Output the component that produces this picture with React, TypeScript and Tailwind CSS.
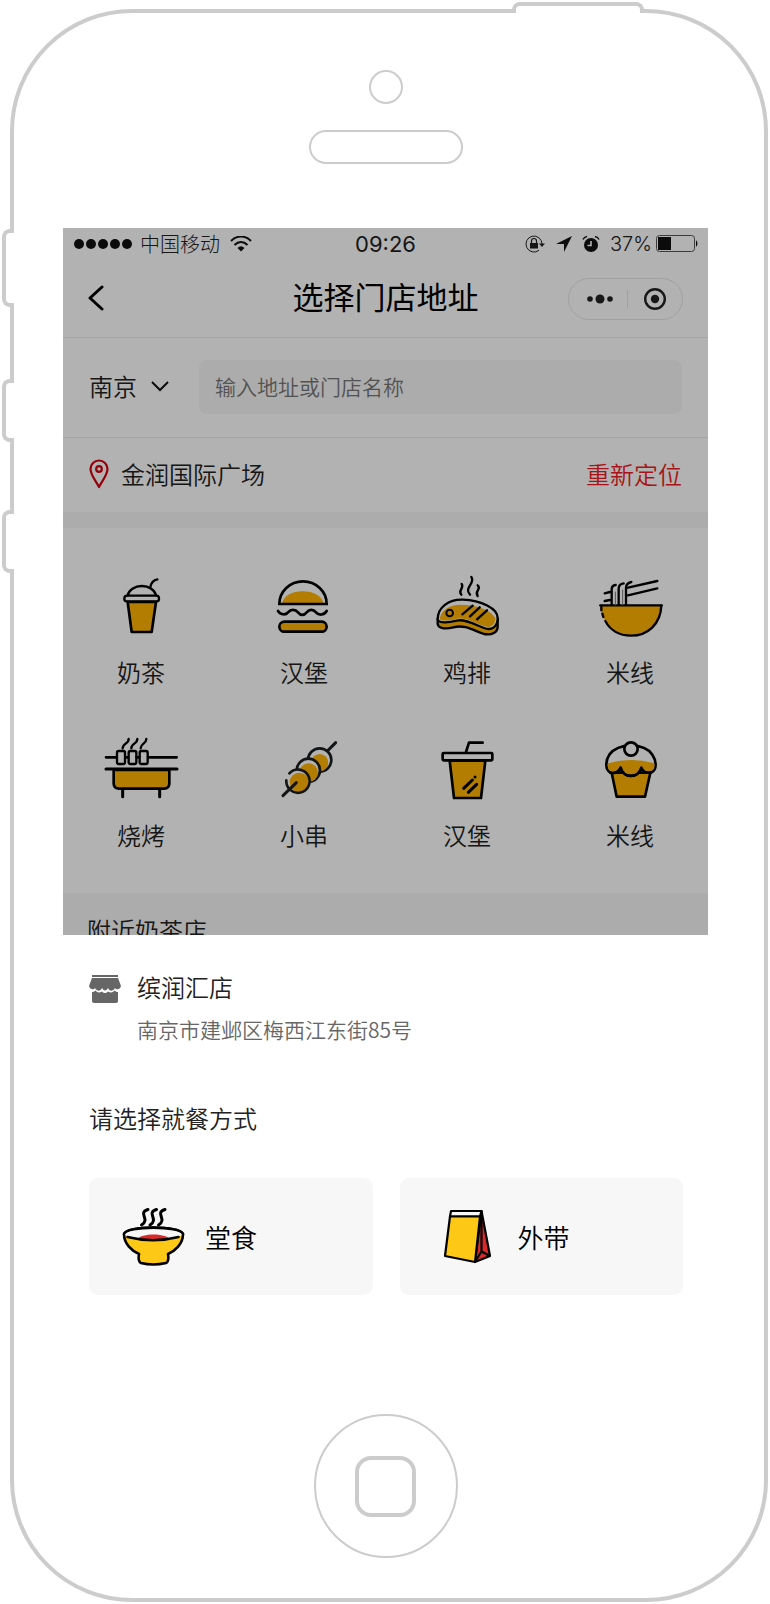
import type { ReactNode } from "react";

const categories: { name: string; viewBox: string; icon: ReactNode }[] = [
  {
    name: "奶茶",
    viewBox: "69 42 228 192",
    icon: (
      <>
        <path d="M143 126 L155 216 H215 L228 126 Z" fill="#ffb400" />
        <path d="M143 106 A43 33 0 0 1 228 106" strokeWidth="7" />
        <rect x="133" y="107" width="104" height="17" rx="8" strokeWidth="7" />
        <path d="M211 82 C213 70 219 60 232 58" strokeWidth="7" />
      </>
    ),
  },
  {
    name: "汉堡",
    viewBox: "558 42 228 192",
    icon: (
      <>
        <path d="M606 129 C614 106 636 94 668 94 C700 94 722 106 731 129 Z" fill="#ffb400" stroke="none" />
        <path d="M598 132 A71 68 0 0 1 740 132 Z" strokeLinejoin="miter" />
        <path d="M594 153 C602 166 618 165 624 157 C632 147 646 147 654 157 C662 167 672 167 680 157 C688 147 700 147 708 157 C716 167 732 166 740 153" />
        <rect x="598" y="185" width="142" height="30" rx="15" fill="#ffb400" />
      </>
    ),
  },
  {
    name: "鸡排",
    viewBox: "57 42 228 192",
    icon: (
      <>
        <path d="M83 176 V192 C86 208 112 207 130 202 C165 192 195 214 222 222 C246 227 263 216 263 200 V176 Z" fill="#ffb400" strokeWidth="7" />
        <path d="M83 178 C83 142 116 118 158 119 C214 121 263 146 263 174 C263 200 246 213 222 204 C194 194 165 175 140 182 C114 189 83 190 83 178 Z" fill="#fff" strokeWidth="7" />
        <path d="M89 176 C94 150 118 134 150 134 C200 134 240 148 256 174 C257 194 243 205 224 199 C196 190 166 170 138 177 C112 184 92 183 89 176 Z" fill="#ffb400" stroke="none" />
        <circle cx="119" cy="159" r="10" strokeWidth="6" />
        <path d="M157 163 L188 137 M180 169 L209 142 M201 178 L231 151" strokeWidth="7" />
        <path d="M155 72 C164 84 142 92 154 104 M184 51 C198 68 160 84 180 104 M203 76 C216 86 192 94 203 108" strokeWidth="7" />
      </>
    ),
  },
  {
    name: "米线",
    viewBox: "546 42 228 192",
    icon: (
      <>
        <path d="M574 137 H754 C752 192 713 227 663 227 C613 227 576 192 574 137 Z" fill="#ffb400" stroke="none" />
        <path d="M571 136 H755" strokeWidth="7" />
        <path d="M754 137 C752 192 713 227 663 227 C628 227 600 210 586 183 M574 140 V151 M577 161 L580 171" strokeWidth="7" />
        <path d="M742 63 L654 83 M742 85 L654 106 M584 100 L600 96 M584 123 L600 120" strokeWidth="7" />
        <path d="M605 135 V88 C605 80 610 76 617 75 M626 135 V86 C626 76 632 71 641 70 M648 135 V84 C648 74 654 68 664 66" strokeWidth="7" />
        <path d="M616 135 V96 M638 135 V90" stroke="#777" strokeWidth="3" />
      </>
    ),
  },
  {
    name: "烧烤",
    viewBox: "69 51 228 192",
    icon: (
      <>
        <path d="M101 150 V190 Q101 206 117 206 H252 Q268 206 268 190 V150 Z" fill="#ffb400" />
        <path d="M78 147 H291 M128 210 V230 M239 210 V230" strokeWidth="9" />
        <path d="M78 112 H108 M136 112 H144 M170 112 H178 M206 112 H290" />
        <path d="M111 98 Q111 93 116 93 H130 Q135 93 135 98 V127 Q135 132 130 132 H116 Q111 132 111 127 Z" strokeWidth="7" />
        <path d="M146 98 Q146 93 151 93 H164 Q169 93 169 98 V127 Q169 132 164 132 H151 Q146 132 146 127 Z" strokeWidth="7" />
        <path d="M179 98 Q179 93 184 93 H198 Q203 93 203 98 V127 Q203 132 198 132 H184 Q179 132 179 127 Z" strokeWidth="7" />
        <path d="M146 57 C146 72 128 70 128 85 M172 57 C172 72 154 70 154 85 M199 57 C199 72 182 70 182 85" strokeWidth="7" />
      </>
    ),
  },
  {
    name: "小串",
    viewBox: "558 51 228 192",
    icon: (
      <g stroke="#1c1e20">
        <path d="M742 93 L767 68" strokeWidth="9" />
        <circle cx="719" cy="120" r="35" fill="#fff" />
        <circle cx="719" cy="128" r="26" fill="#ffb400" stroke="none" />
        <circle cx="685" cy="151" r="35" fill="#fff" />
        <circle cx="686" cy="158" r="28" fill="#ffb400" stroke="none" />
        <circle cx="655" cy="183" r="36" fill="#fff" stroke="none" />
        <circle cx="658" cy="187" r="29" fill="#ffb400" stroke="none" />
        <path d="M628 160 A35 35 0 1 1 619 181" />
        <path d="M609 227 L649 188" strokeWidth="9" />
      </g>
    ),
  },
  {
    name: "汉堡",
    viewBox: "57 51 228 192",
    icon: (
      <>
        <path d="M119 122 L132 234 H213 L226 122 Z" fill="#ffb400" />
        <rect x="98" y="99" width="149" height="22" rx="3" fill="#fff" />
        <path d="M168 96 L177 68 H218" />
        <path d="M161 205 L187 180 M175 217 L200 193 M195 171 V171" strokeWidth="9" />
      </>
    ),
  },
  {
    name: "米线",
    viewBox: "546 51 228 192",
    icon: (
      <>
        <path d="M605 158 L620 230 H705 L721 158 Z" fill="#ffb400" />
        <path d="M632 143 Q622 163 601 158 C583 148 588 118 598 104 C610 88 630 77 663 77 C696 77 716 88 727 104 C737 118 744 148 724 157 Q702 162 694 143 C685 176 640 176 632 143 Z" fill="#fff" />
        <path d="M594 130 Q663 110 733 130 Q736 150 722 153 Q706 158 694 140 C684 170 642 170 632 140 Q620 158 603 153 Q591 150 594 130 Z" fill="#ffb400" stroke="none" />
        <path d="M632 143 Q622 163 601 158 M724 157 Q702 162 694 143 C685 176 640 176 632 143" />
        <circle cx="663" cy="87" r="20" fill="#fff" />
      </>
    ),
  },
];

function StatusBar() {
  return (
    <div className="relative flex h-8 items-center justify-between pr-[9px] pl-[11px]">
      <div className="flex items-center">
        <svg width="58" height="10" fill="#111">
          <circle cx="5" cy="5" r="5" />
          <circle cx="17" cy="5" r="5" />
          <circle cx="29" cy="5" r="5" />
          <circle cx="41" cy="5" r="5" />
          <circle cx="53" cy="5" r="5" />
        </svg>
        <span className="ml-2 text-[20px] leading-6 font-light">中国移动</span>
        <svg className="ml-[10px]" width="22" height="16" viewBox="0 0 22 16" fill="none" stroke="#111" strokeWidth="2">
          <path d="M1 5 C7 -1 15 -1 21 5" />
          <path d="M4.500 9 C8.500 5 13.500 5 17.500 9" />
          <path d="M7.500 12 Q11 8.500 14.500 12 L11 15.500 Z" fill="#111" stroke="none" />
        </svg>
      </div>
      <span className="absolute inset-x-0 text-center font-[Inter] text-[22px] leading-6">09:26</span>
      <div className="flex items-center">
        <svg width="20" height="18" viewBox="0 0 20 18" fill="none" stroke="#222">
          <path d="M17 9 A8 8 0 1 0 14 15.300" />
          <path d="M14 8.500 H20 L17 12 Z" fill="#222" stroke="none" />
          <rect x="5" y="8" width="8" height="5.500" fill="#222" stroke="none" />
          <path d="M6.500 8 V6 A2.500 2.500 0 0 1 11.500 6 V8" strokeWidth="1.200" />
        </svg>
        <svg className="ml-[11px]" width="16" height="16" viewBox="0 0 16 16" fill="#111">
          <path d="M16 0 L8 16 L8 8 L0 8 Z" />
        </svg>
        <svg className="ml-[10px]" width="18" height="18" viewBox="0 0 18 18" fill="none" stroke="#111">
          <circle cx="9" cy="10" r="7" fill="#111" stroke="none" />
          <path d="M9 6 V10.500 H5.500" stroke="#fff" strokeWidth="1.600" />
          <path d="M1 4.500 Q2 2 5 1.500 M13 1.500 Q16 2 17 4.500" strokeWidth="1.400" />
        </svg>
        <span className="ml-[10px] font-[Inter] text-[20px] leading-6 font-light">37%</span>
        <svg className="ml-1" width="43" height="18" viewBox="0 0 43 18" fill="none">
          <rect x="0.500" y="0.500" width="38" height="16" rx="3" stroke="#555" />
          <rect x="2" y="2" width="13" height="13" fill="#111" />
          <path d="M40 5 Q43 8.500 40 12 Z" fill="#111" />
        </svg>
      </div>
    </div>
  );
}

function Header() {
  return (
    <header className="relative flex h-[78px] items-center justify-between border-b border-[#ececec] px-[25px]">
      <button aria-label="返回" className="pb-[2px]">
        <svg width="16" height="28" viewBox="0 0 16 28" fill="none" stroke="#000" strokeWidth="3" strokeLinecap="round" strokeLinejoin="round">
          <path d="M14 3 L2 14 L14 25" />
        </svg>
      </button>
      <h1 className="pointer-events-none absolute inset-x-0 pb-[6px] text-center text-[31px] leading-8 text-black">选择门店地址</h1>
      <div className="flex h-[42px] w-[115px] items-center rounded-full border border-[#e6e6e6]">
        <button aria-label="更多" className="flex flex-1 justify-center border-r border-[#e6e6e6] pl-1">
          <svg width="26" height="18" fill="#222">
            <circle cx="3" cy="9" r="2.800" />
            <circle cx="13" cy="9" r="4.500" />
            <circle cx="23" cy="9" r="2.800" />
          </svg>
        </button>
        <button aria-label="关闭" className="flex flex-1 justify-center">
          <svg width="24" height="24" fill="none">
            <circle cx="12" cy="12" r="9.800" stroke="#222" strokeWidth="2.400" />
            <circle cx="12" cy="12" r="4.200" fill="#222" />
          </svg>
        </button>
      </div>
    </header>
  );
}

function StorePage() {
  return (
    <div className="relative bg-white text-[#222]">
      <StatusBar />
      <Header />
      <div className="flex items-center border-b border-[#ececec] pt-[22px] pr-[26px] pb-[23px] pl-[26px]">
        <button className="flex items-center pb-[2px] text-[24px] leading-6 font-[350]">
          南京
          <svg className="ml-[14px]" width="18" height="12" viewBox="0 0 18 12" fill="none" stroke="#111" strokeWidth="2">
            <path d="M1 2 L9 10 L17 2" />
          </svg>
        </button>
        <input
          aria-label="输入地址或门店名称"
          placeholder="输入地址或门店名称"
          className="ml-[30px] h-[54px] min-w-0 flex-1 rounded-lg bg-[#f6f6f6] px-4 pb-[2px] text-[21px] font-[350] placeholder:text-[#777]"
        />
      </div>
      <div className="flex h-[74px] items-center px-[26px] pb-[2px] text-[24px] leading-6 font-[350]">
        <svg width="20" height="30" viewBox="0 0 20 30" fill="none" stroke="#d4000f" strokeWidth="2.200">
          <path d="M10 28 C7 22 1.500 16 1.500 10 A8.500 8.500 0 0 1 18.500 10 C18.500 16 13 22 10 28 Z" strokeLinejoin="round" />
          <circle cx="10" cy="10" r="2.800" />
        </svg>
        <span className="ml-3 flex-1">金润国际广场</span>
        <button className="text-[#f01c24]">重新定位</button>
      </div>
      <div className="h-4 bg-[#f6f6f6]" />
      <div className="space-y-[53px] px-10 pt-[46px] pb-[46px]">
        {[categories.slice(0, 4), categories.slice(4)].map((row, i) => (
          <div key={i} className="flex justify-between">
            {row.map((item) => (
              <a key={item.name} href="#" className="flex w-[76px] flex-col items-center gap-[22px]">
                <svg width="76" height="64" viewBox={item.viewBox} fill="none" stroke="#000" strokeWidth="8" strokeLinecap="round" strokeLinejoin="round">
                  {item.icon}
                </svg>
                <span className="text-[24px] leading-6 font-[350]">{item.name}</span>
              </a>
            ))}
          </div>
        ))}
      </div>
      <div className="h-[42px] overflow-hidden bg-[#f6f6f6] pt-[25px] pl-6">
        <h2 className="text-[24px] leading-6 font-[350]">附近奶茶店</h2>
      </div>
      <div className="pointer-events-none absolute inset-0 bg-black/30" />
    </div>
  );
}

function DiningSheet() {
  return (
    <div className="bg-white pt-[40px] pr-[25px] pl-[26px] font-[350] text-[#222]">
      <div className="flex">
        <svg width="32" height="28" viewBox="0 0 32 28" fill="#666">
          <path d="M3 0 H29 V2 H3 Z" />
          <path d="M3 3 H29 L32 11 C31 15 27 15 26 13 C24 17 20 16 19 13 Q16 18 13 13 C12 16 8 17 6 13 C5 15 1 15 0 11 Z" />
          <path d="M3 17 Q5 17 6.500 15.500 Q9 19 13 16.500 Q16 19.500 19 16.500 Q23 19 25.500 15.500 Q27 17 29 17 V26 Q29 28 27 28 H5 Q3 28 3 26 Z" />
        </svg>
        <div className="ml-4">
          <h2 className="text-[24px] leading-6">缤润汇店</h2>
          <p className="mt-[18px] text-[21px] leading-6 text-[#666]">南京市建邺区梅西江东街85号</p>
        </div>
      </div>
      <h3 className="mt-[65px] text-[24px] leading-6">请选择就餐方式</h3>
      <div className="mt-[48px] grid grid-cols-2 gap-[27px] text-[26px] text-black">
        <button className="flex h-[117px] items-center gap-5 rounded-[9px] bg-[#f7f7f7] pl-8">
          <svg width="64" height="64" viewBox="0 0 64 64" fill="none" stroke="#000" strokeWidth="2.600" strokeLinecap="round" strokeLinejoin="round">
            <path d="M3 29 C3 39 11 46 18 49 C17 54 18 57 20 58 Q32 61 45 58 C47 57 48 54 47 49 C54 46 62 39 62 29 C60 20.500 5 20.500 3 29 Z" fill="#fec817" />
            <path d="M4 29 C6 21.500 59 21.500 61 29 C60 33 46 35.500 32.500 35.500 C19 35.500 5 33 4 29 Z" fill="#f7f7f7" stroke="none" />
            <path d="M16 34 C21 28 44 28 49 34 Q32 37 16 34 Z" fill="#d9292b" stroke="none" />
            <path d="M3 29 C5 20.500 60 20.500 62 29 M6.500 32 Q32 38.500 57.500 32" />
            <path d="M27 4.500 C16 8 30 14 20.500 20 M35.500 4.500 C24.500 8 38.500 14 29 20 M44 4.500 C33 8 47 14 37.500 20" strokeWidth="3" />
          </svg>
          堂食
        </button>
        <button className="flex h-[117px] items-center gap-[22px] rounded-[9px] bg-[#f7f7f7] pl-8">
          <svg width="64" height="64" viewBox="1 0 64 64" fill="none" stroke="#000" strokeWidth="2.200" strokeLinejoin="round">
            <path d="M50.500 6 L59 51 L44 57 Z" fill="#d9292b" />
            <path d="M20 6 H50.500 L49 11.500 H19 Z" fill="#f7f7f7" />
            <path d="M19 11.500 H49 L44 57 L14 51 Z" fill="#fec817" />
            <path d="M50.500 6 L50.500 46.500 L44.500 56 M50.500 46.500 L59 51" />
          </svg>
          外带
        </button>
      </div>
    </div>
  );
}

export default function App() {
  return (
    <div className="bg-white pt-[9px] pr-[2px] pb-[2px] pl-[10px] font-['Noto_Sans_CJK_SC',sans-serif]">
      <div className="relative rounded-[122px] border-4 border-[#ccc] bg-white pt-[57px] pr-[56px] pb-10 pl-[49px]">
        {/* hardware buttons sit over the frame */}
        <div className="absolute -top-[11px] right-[120px] h-[11px] w-[132px] rounded-t-lg border-4 border-b-0 border-[#ccc] bg-white" />
        <div className="absolute top-[216px] -left-3 h-[78px] w-3 rounded-l-lg border-4 border-r-0 border-[#ccc] bg-white" />
        <div className="absolute top-[366px] -left-3 h-[63px] w-3 rounded-l-lg border-4 border-r-0 border-[#ccc] bg-white" />
        <div className="absolute top-[497px] -left-3 h-[63px] w-3 rounded-l-lg border-4 border-r-0 border-[#ccc] bg-white" />

        <div className="mx-auto h-[34px] w-[34px] rounded-full border-2 border-[#ccc]" />
        <div className="mx-auto mt-[26px] h-[34px] w-[154px] rounded-full border-2 border-[#ccc]" />
        <main className="mt-16">
          <StorePage />
          <DiningSheet />
        </main>
        <button aria-label="主屏幕" className="mx-auto mt-[119px] flex h-36 w-36 items-center justify-center rounded-full border-2 border-[#ccc]">
          <span className="h-[61px] w-[61px] rounded-2xl border-4 border-[#ccc]" />
        </button>
      </div>
    </div>
  );
}
